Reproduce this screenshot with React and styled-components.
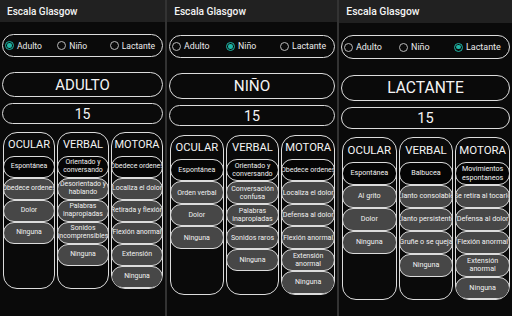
import React from "react";
import styled, { createGlobalStyle } from "styled-components";

const Global = createGlobalStyle`
  html, body { margin: 0; padding: 0; background: #0a0a0a; }
  body { font-family: Roboto, "Liberation Sans", sans-serif; color: #f2f2f2; }
  * { box-sizing: border-box; }
`;

const Screen = styled.div`
  display: flex;
  width: 512px;
  height: 316px;
  overflow: hidden;
  background: #0a0a0a;
`;

const Panel = styled.div`
  --k: ${(p) => p.$k};
  width: ${(p) => p.$w}px;
  flex: none;
  height: 316px;
  display: flex;
  flex-direction: column;
  border-left: ${(p) => (p.$first ? "none" : "2px solid #333")};
  background: #0a0a0a;
  overflow: hidden;
`;

const TitleBar = styled.div`
  height: calc(22px * var(--k));
  background: #212121;
  display: flex;
  align-items: center;
  padding-left: calc(7px * var(--k));
  font-size: calc(10px * var(--k));
  font-weight: 500;
  color: #f4f4f4;
  flex: none;
`;

const Body = styled.div`
  display: flex;
  flex-direction: column;
  padding: calc(12px * var(--k)) 2px 0 2px;
`;

const RadioGroup = styled.div`
  height: calc(23px * var(--k));
  border: 1.4px solid #dcdcdc;
  border-radius: 12px;
  display: grid;
  grid-template-columns: 1fr 1fr 1fr;
  align-items: center;
  padding: 0 0 0 2px;
`;

const RadioItem = styled.div`
  display: flex;
  align-items: center;
  gap: 3px;
  font-size: calc(8.6px * var(--k));
  color: #ececec;
`;

const RadioCircle = styled.span`
  width: 9px;
  height: 9px;
  border-radius: 50%;
  border: 1.3px solid ${(p) => (p.$on ? "#1fb5a5" : "#b8b8b8")};
  display: flex;
  align-items: center;
  justify-content: center;
  flex: none;
  &::after {
    content: "";
    width: 4.4px;
    height: 4.4px;
    border-radius: 50%;
    background: ${(p) => (p.$on ? "#1fb5a5" : "transparent")};
  }
`;

const ModeBox = styled.div`
  margin-top: calc(15px * var(--k));
  height: calc(25px * var(--k));
  border: 1.4px solid #dcdcdc;
  border-radius: 13px;
  display: flex;
  align-items: center;
  justify-content: center;
  font-size: calc(15px * var(--k));
  color: #f4f4f4;
`;

const ScoreBox = styled.div`
  margin-top: calc(6px * var(--k));
  height: calc(21px * var(--k));
  border: 1.4px solid #dcdcdc;
  border-radius: 11px;
  display: flex;
  align-items: center;
  justify-content: center;
  font-size: calc(14px * var(--k));
  color: #f4f4f4;
`;

const Columns = styled.div`
  margin-top: calc(8px * var(--k));
  display: grid;
  grid-template-columns: 1fr 1fr 1fr;
  gap: 2px;
  padding: 0 0 0 1px;
  align-items: stretch;
`;

const Column = styled.div`
  border: 1.4px solid #dcdcdc;
  border-radius: 14px;
  display: flex;
  flex-direction: column;
  overflow: hidden;
`;

const ColHeader = styled.div`
  height: calc(23px * var(--k));
  display: flex;
  align-items: center;
  justify-content: center;
  font-size: calc(11px * var(--k));
  color: #f4f4f4;
  flex: none;
`;

const Item = styled.div`
  height: calc(22px * var(--k));
  flex: none;
  margin: 0 -1px;
  border: 1.2px solid #dcdcdc;
  border-radius: 11px;
  background: ${(p) => (p.$sel ? "#050505" : "#474747")};
  display: flex;
  align-items: center;
  justify-content: center;
  text-align: center;
  white-space: pre;
  overflow: hidden;
  font-size: calc(6.9px * var(--k));
  line-height: 1.15;
  color: #f2f2f2;
`;

const panels = [
  {
    w: 165,
    k: 1,
    mode: 0,
    title: "ADULTO",
    cols: [
      ["OCULAR", ["Espontánea", "Obedece ordenes", "Dolor", "Ninguna"]],
      [
        "VERBAL",
        [
          "Orientado y\nconversando",
          "Desorientado y\nhablando",
          "Palabras\ninapropiadas",
          "Sonidos\nincomprensibles",
          "Ninguna",
        ],
      ],
      [
        "MOTORA",
        [
          "Obedece ordenes",
          "Localiza el dolor",
          "Retirada y flexión",
          "Flexión anormal",
          "Extensión",
          "Ninguna",
        ],
      ],
    ],
  },
  {
    w: 172,
    k: 1.02,
    mode: 1,
    title: "NIÑO",
    cols: [
      ["OCULAR", ["Espontánea", "Orden verbal", "Dolor", "Ninguna"]],
      [
        "VERBAL",
        [
          "Orientado y\nconversando",
          "Conversación\nconfusa",
          "Palabras\ninapropiadas",
          "Sonidos raros",
          "Ninguna",
        ],
      ],
      [
        "MOTORA",
        [
          "Obedece ordenes",
          "Localiza el dolor",
          "Defensa al dolor",
          "Flexión anormal",
          "Extensión\nanormal",
          "Ninguna",
        ],
      ],
    ],
  },
  {
    w: 175,
    k: 1.04,
    mode: 2,
    title: "LACTANTE",
    cols: [
      ["OCULAR", ["Espontánea", "Al grito", "Dolor", "Ninguna"]],
      [
        "VERBAL",
        [
          "Balbucea",
          "Llanto consolable",
          "Llanto persistente",
          "Gruñe o se queja",
          "Ninguna",
        ],
      ],
      [
        "MOTORA",
        [
          "Movimientos\nespontaneos",
          "Se retira al tocarlo",
          "Defensa al dolor",
          "Flexión anormal",
          "Extensión\nanormal",
          "Ninguna",
        ],
      ],
    ],
  },
];

const modes = ["Adulto", "Niño", "Lactante"];

export default function App() {
  return (
    <Screen>
      <Global />
      {panels.map((p, i) => (
        <Panel key={i} $w={p.w} $k={p.k} $first={i === 0}>
          <TitleBar>Escala Glasgow</TitleBar>
          <Body>
            <RadioGroup>
              {modes.map((m, j) => (
                <RadioItem key={m}>
                  <RadioCircle $on={j === p.mode} />
                  {m}
                </RadioItem>
              ))}
            </RadioGroup>
            <ModeBox>{p.title}</ModeBox>
            <ScoreBox>15</ScoreBox>
            <Columns>
              {p.cols.map(([h, items]) => (
                <Column key={h}>
                  <ColHeader>{h}</ColHeader>
                  {items.map((t, n) => (
                    <Item key={n} $sel={n === 0}>
                      {t}
                    </Item>
                  ))}
                </Column>
              ))}
            </Columns>
          </Body>
        </Panel>
      ))}
    </Screen>
  );
}
